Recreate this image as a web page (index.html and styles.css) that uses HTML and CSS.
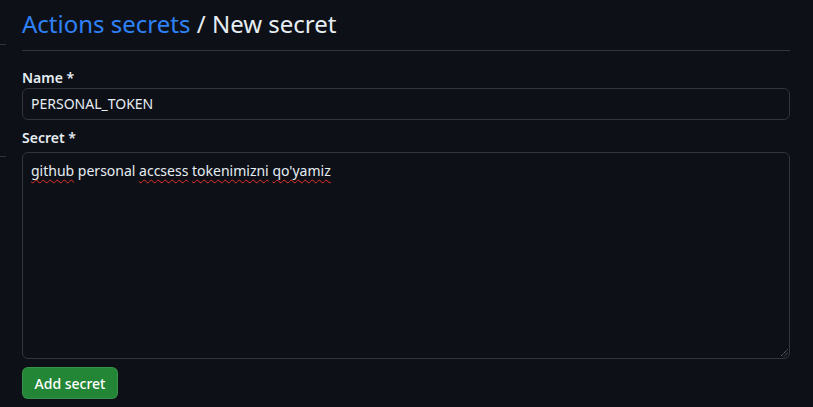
FILE: index.html
```html
<!DOCTYPE html>
<html lang="en">
<head>
<meta charset="utf-8">
<title>New secret</title>
<link rel="stylesheet" href="styles.css">
</head>
<body>
<div class="layout">
  <aside class="sidebar-edge">
    <span class="edge edge-top"></span>
    <span class="edge edge-bottom"></span>
  </aside>
  <main class="content">
    <div class="subhead">
      <h2 class="subhead-heading"><a class="crumb" href="#">Actions secrets</a> / New secret</h2>
    </div>
    <form class="secret-form">
      <label class="form-label label-name">Name *</label>
      <div class="form-input">PERSONAL_TOKEN</div>
      <label class="form-label label-secret">Secret *</label>
      <div class="form-textarea">
        <span class="typo">github</span> personal <span class="typo">accsess</span> <span class="typo">tokenimizni</span> <span class="typo">qo'yamiz</span>
        <svg class="grip" width="8" height="8" viewBox="0 0 8 8"><path d="M7.5 0.5 L0.5 7.5 M7.5 4 L4 7.5" stroke="#8b949e" stroke-width="1" fill="none" stroke-dasharray="1 1"/></svg>
      </div>
      <div class="actions">
        <button type="button" class="btn-primary">Add secret</button>
      </div>
    </form>
  </main>
</div>
</body>
</html>
```

FILE: styles.css
```css
html, body {
  margin: 0;
  padding: 0;
  background: #0d1117;
  color: #e6edf3;
  font-family: "Noto Sans", "Open Sans", "Liberation Sans", sans-serif;
  font-size: 14px;
  line-height: 1.5;
}

.layout {
  display: flex;
  height: 407px;
  overflow: hidden;
}

.sidebar-edge {
  width: 6px;
  flex: none;
  display: flex;
  flex-direction: column;
}

.edge {
  display: block;
  height: 1px;
  background: #30363d;
  width: 6px;
}

.edge-top { margin-top: 44px; }
.edge-bottom { margin-top: 111px; }

.content {
  flex: 1;
  margin-left: 16px;
  margin-right: 23px;
  padding-top: 6px;
}

.subhead {
  border-bottom: 1px solid #30363d;
  padding-bottom: 8px;
  margin-bottom: 16px;
}

.subhead-heading {
  margin: 0;
  font-size: 24px;
  font-weight: 400;
  line-height: 36px;
  color: #e6edf3;
}

.crumb {
  color: #2f81f7;
  text-decoration: none;
}

.secret-form {
  display: flex;
  flex-direction: column;
}

.form-label {
  display: block;
  font-weight: 600;
  font-size: 14px;
  line-height: 21px;
}

.label-secret {
  margin-top: 7px;
  margin-bottom: 4px;
}

.form-input {
  height: 32px;
  box-sizing: border-box;
  border: 1px solid #30363d;
  border-radius: 6px;
  padding: 0 8px;
  line-height: 30px;
  font-size: 14px;
  background: #0d1117;
  color: #e6edf3;
}

.form-textarea {
  position: relative;
  height: 207px;
  box-sizing: border-box;
  border: 1px solid #30363d;
  border-radius: 6px;
  padding: 8px;
  font-size: 14px;
  line-height: 20px;
  color: #e6edf3;
  background: #0d1117;
}

.typo {
  text-decoration: underline wavy #e5312a;
  text-decoration-thickness: 1px;
  text-underline-offset: 3px;
}

.grip {
  position: absolute;
  right: 1px;
  bottom: 1px;
}

.actions {
  margin-top: 8px;
}

.btn-primary {
  height: 32px;
  width: 96px;
  border: 1px solid rgba(240, 246, 252, 0.1);
  border-radius: 6px;
  background: #238636;
  color: #ffffff;
  font-family: inherit;
  font-size: 14px;
  font-weight: 500;
  padding: 0;
  white-space: nowrap;
  cursor: pointer;
}
```
